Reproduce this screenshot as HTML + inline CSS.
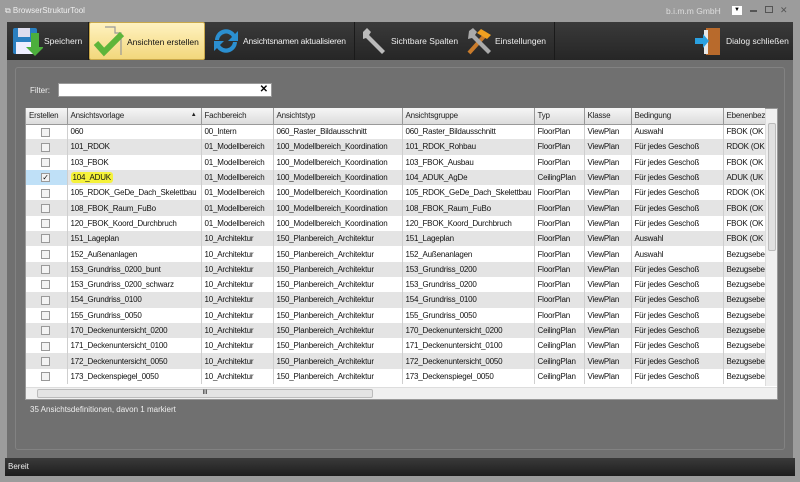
<!DOCTYPE html><html><head><meta charset="utf-8"><style>
*{margin:0;padding:0;box-sizing:border-box}
body{width:800px;height:482px;background:#9c9c9c;font-family:"Liberation Sans",sans-serif;font-size:8px;position:relative;overflow:hidden}
.a{position:absolute}
.tb{left:7px;top:22px;width:786px;height:38px;background:linear-gradient(#3a3a3a,#262626)}
.btn{position:absolute;top:0;height:38px;color:#eee;font-size:8.5px;line-height:38px;white-space:nowrap}
.main{left:7px;top:60px;width:786px;height:398px;background:#707070}
.panel{left:15px;top:67px;width:770px;height:383px;border:1px solid #828282;border-radius:3px}
table{border-collapse:collapse;table-layout:fixed;position:absolute;left:26px;top:108px;width:739px}
td,th{height:15.3px;padding:0 3px;white-space:nowrap;overflow:hidden;font-weight:normal;text-align:left;color:#111;border-right:1px solid #cfcfcf;letter-spacing:-0.2px}
th{background:linear-gradient(#f6f6f6,#dcdcdc);border-right:1px solid #999;border-bottom:1px solid #999;color:#222;height:16px;position:relative}
tr:nth-child(odd) td{background:#e4e4e4}
tr:nth-child(even) td{background:#fff}
.cb{display:inline-block;width:9px;height:9px;border:1px solid #999;background:#f3f3f3;margin-left:12px;vertical-align:middle}
</style></head><body>
<div class="a" style="left:5px;top:6px;color:#eee;font-size:8px">⧉ BrowserStrukturTool</div>
<div class="a" style="left:666px;top:6px;color:#ddd;font-size:8.5px">b.i.m.m GmbH</div>
<div class="a" style="left:732px;top:6px;width:10px;height:9px;background:#fff;font-size:6px;text-align:center;line-height:9px">▼</div>
<div class="a" style="left:750px;top:10px;width:7px;height:2px;background:#555"></div>
<div class="a" style="left:765px;top:6px;width:8px;height:7px;border:1.5px solid #555"></div>
<div class="a" style="left:780px;top:5px;color:#555;font-size:9px">✕</div>
<div class="a tb">
 <div class="btn" style="left:0;width:82px;border-right:1px solid #1a1a1a">
  <svg class="a" style="left:4px;top:3px" width="32" height="32"><rect x="2" y="3" width="24" height="26" rx="2" fill="#2a7fc0"/><rect x="7" y="3" width="12" height="9" fill="#dde"/><rect x="5" y="17" width="18" height="12" fill="#eef"/><path d="M20 8v14h-5l9 9 9-9h-5V8z" fill="#4caf3c"/></svg>
  <span style="position:absolute;left:37px">Speichern</span></div>
 <div class="btn" style="left:82px;width:116px;background:linear-gradient(#fff2c0,#f2d77c);border:1px solid #c9a84a;border-radius:2px;color:#111">
  <svg class="a" style="left:3px;top:2px" width="34" height="34"><path d="M12 2h10v6h6v22" fill="none" stroke="#999" stroke-width="1.2"/><path d="M3 18l8 9 18-18" fill="none" stroke="#5db53a" stroke-width="6"/></svg>
  <span style="position:absolute;left:37px">Ansichten erstellen</span></div>
 <div class="btn" style="left:198px;width:150px;border-right:1px solid #1a1a1a">
  <svg class="a" style="left:6px;top:4px" width="30" height="30"><path d="M4 14A11 11 0 0 1 24 8l3-3v10H17l4-4A7 7 0 0 0 8 14z" fill="#2b8fd0"/><path d="M26 16A11 11 0 0 1 6 22l-3 3V15h10l-4 4a7 7 0 0 0 13-3z" fill="#2b8fd0"/></svg>
  <span style="position:absolute;left:38px;letter-spacing:-0.2px">Ansichtsnamen aktualisieren</span></div>
 <div class="btn" style="left:348px;width:106px">
  <svg class="a" style="left:4px;top:4px" width="30" height="30"><path d="M4 6l4-4 4 4-2 3 16 16-3 3L7 12 4 13z" fill="#bbb"/></svg>
  <span style="position:absolute;left:36px">Sichtbare Spalten</span></div>
 <div class="btn" style="left:452px;width:96px;border-right:1px solid #1a1a1a">
  <svg class="a" style="left:4px;top:3px" width="32" height="32"><path d="M6 28L24 8" stroke="#c97b2b" stroke-width="4"/><path d="M18 4l10 6-4 4-10-6z" fill="#f0a020"/><path d="M6 6l4-3 4 4-2 3 16 16-3 3L9 13 5 14z" fill="#aaa"/></svg>
  <span style="position:absolute;left:36px">Einstellungen</span></div>
 <div class="btn" style="left:686px;width:100px">
  <svg class="a" style="left:0;top:3px" width="30" height="32"><rect x="13" y="3" width="14" height="27" fill="#b86a2c"/><rect x="11" y="5" width="4" height="24" fill="#e8e8e8"/><path d="M2 13h8v-4l6 7-6 7v-4H2z" fill="#2aa0e0"/></svg>
  <span style="position:absolute;left:33px">Dialog schließen</span></div>
</div>
<div class="a main"></div>
<div class="a panel"></div>
<div class="a" style="left:30px;top:86px;color:#eee;font-size:8px">Filter:</div>
<div class="a" style="left:58px;top:83px;width:214px;height:14px;background:#fff;border:1px solid #999"><span style="position:absolute;right:3px;top:0;font-size:10px;font-weight:bold">✕</span></div>
<div class="a" style="left:25px;top:108px;width:753px;height:292px;background:#fff;border:1px solid #999"></div>
<table>
<colgroup><col style="width:41px"><col style="width:134px"><col style="width:72px"><col style="width:129px"><col style="width:132px"><col style="width:50px"><col style="width:47px"><col style="width:92px"><col style="width:42px"></colgroup>
<tr><th>Erstellen</th><th>Ansichtsvorlage<span style="position:absolute;right:4px;top:4px;font-size:6px">▲</span></th><th>Fachbereich</th><th>Ansichtstyp</th><th>Ansichtsgruppe</th><th>Typ</th><th>Klasse</th><th>Bedingung</th><th>Ebenenbez</th></tr>
<tr><td><span class="cb"></span></td><td>060</td><td>00_Intern</td><td>060_Raster_Bildausschnitt</td><td>060_Raster_Bildausschnitt</td><td>FloorPlan</td><td>ViewPlan</td><td>Auswahl</td><td>FBOK (OK</td></tr>
<tr><td><span class="cb"></span></td><td>101_RDOK</td><td>01_Modellbereich</td><td>100_Modellbereich_Koordination</td><td>101_RDOK_Rohbau</td><td>FloorPlan</td><td>ViewPlan</td><td>Für jedes Geschoß</td><td>RDOK (OK</td></tr>
<tr><td><span class="cb"></span></td><td>103_FBOK</td><td>01_Modellbereich</td><td>100_Modellbereich_Koordination</td><td>103_FBOK_Ausbau</td><td>FloorPlan</td><td>ViewPlan</td><td>Für jedes Geschoß</td><td>FBOK (OK</td></tr>
<tr><td style="background:#bfe0f7"><span class="cb" style="font-size:8px;line-height:7px;text-align:center">✓</span></td><td><span style="background:#f5f23a;padding:1px 2px;border-radius:3px">104_ADUK</span></td><td>01_Modellbereich</td><td>100_Modellbereich_Koordination</td><td>104_ADUK_AgDe</td><td>CeilingPlan</td><td>ViewPlan</td><td>Für jedes Geschoß</td><td>ADUK (UK</td></tr>
<tr><td><span class="cb"></span></td><td>105_RDOK_GeDe_Dach_Skelettbau</td><td>01_Modellbereich</td><td>100_Modellbereich_Koordination</td><td>105_RDOK_GeDe_Dach_Skelettbau</td><td>FloorPlan</td><td>ViewPlan</td><td>Für jedes Geschoß</td><td>RDOK (OK</td></tr>
<tr><td><span class="cb"></span></td><td>108_FBOK_Raum_FuBo</td><td>01_Modellbereich</td><td>100_Modellbereich_Koordination</td><td>108_FBOK_Raum_FuBo</td><td>FloorPlan</td><td>ViewPlan</td><td>Für jedes Geschoß</td><td>FBOK (OK</td></tr>
<tr><td><span class="cb"></span></td><td>120_FBOK_Koord_Durchbruch</td><td>01_Modellbereich</td><td>100_Modellbereich_Koordination</td><td>120_FBOK_Koord_Durchbruch</td><td>FloorPlan</td><td>ViewPlan</td><td>Für jedes Geschoß</td><td>FBOK (OK</td></tr>
<tr><td><span class="cb"></span></td><td>151_Lageplan</td><td>10_Architektur</td><td>150_Planbereich_Architektur</td><td>151_Lageplan</td><td>FloorPlan</td><td>ViewPlan</td><td>Auswahl</td><td>FBOK (OK</td></tr>
<tr><td><span class="cb"></span></td><td>152_Außenanlagen</td><td>10_Architektur</td><td>150_Planbereich_Architektur</td><td>152_Außenanlagen</td><td>FloorPlan</td><td>ViewPlan</td><td>Auswahl</td><td>Bezugsebe</td></tr>
<tr><td><span class="cb"></span></td><td>153_Grundriss_0200_bunt</td><td>10_Architektur</td><td>150_Planbereich_Architektur</td><td>153_Grundriss_0200</td><td>FloorPlan</td><td>ViewPlan</td><td>Für jedes Geschoß</td><td>Bezugsebe</td></tr>
<tr><td><span class="cb"></span></td><td>153_Grundriss_0200_schwarz</td><td>10_Architektur</td><td>150_Planbereich_Architektur</td><td>153_Grundriss_0200</td><td>FloorPlan</td><td>ViewPlan</td><td>Für jedes Geschoß</td><td>Bezugsebe</td></tr>
<tr><td><span class="cb"></span></td><td>154_Grundriss_0100</td><td>10_Architektur</td><td>150_Planbereich_Architektur</td><td>154_Grundriss_0100</td><td>FloorPlan</td><td>ViewPlan</td><td>Für jedes Geschoß</td><td>Bezugsebe</td></tr>
<tr><td><span class="cb"></span></td><td>155_Grundriss_0050</td><td>10_Architektur</td><td>150_Planbereich_Architektur</td><td>155_Grundriss_0050</td><td>FloorPlan</td><td>ViewPlan</td><td>Für jedes Geschoß</td><td>Bezugsebe</td></tr>
<tr><td><span class="cb"></span></td><td>170_Deckenuntersicht_0200</td><td>10_Architektur</td><td>150_Planbereich_Architektur</td><td>170_Deckenuntersicht_0200</td><td>CeilingPlan</td><td>ViewPlan</td><td>Für jedes Geschoß</td><td>Bezugsebe</td></tr>
<tr><td><span class="cb"></span></td><td>171_Deckenuntersicht_0100</td><td>10_Architektur</td><td>150_Planbereich_Architektur</td><td>171_Deckenuntersicht_0100</td><td>CeilingPlan</td><td>ViewPlan</td><td>Für jedes Geschoß</td><td>Bezugsebe</td></tr>
<tr><td><span class="cb"></span></td><td>172_Deckenuntersicht_0050</td><td>10_Architektur</td><td>150_Planbereich_Architektur</td><td>172_Deckenuntersicht_0050</td><td>CeilingPlan</td><td>ViewPlan</td><td>Für jedes Geschoß</td><td>Bezugsebe</td></tr>
<tr><td><span class="cb"></span></td><td>173_Deckenspiegel_0050</td><td>10_Architektur</td><td>150_Planbereich_Architektur</td><td>173_Deckenspiegel_0050</td><td>CeilingPlan</td><td>ViewPlan</td><td>Für jedes Geschoß</td><td>Bezugsebe</td></tr>
</table>
<div class="a" style="left:26px;top:384px;width:739px;height:3px;background:#fff"></div>
<div class="a" style="left:765px;top:109px;width:12px;height:277px;background:#f0f0f0;border-left:1px solid #ddd"><div class="a" style="left:2px;top:14px;width:8px;height:128px;background:#e0e0e0;border:1px solid #bbb;border-radius:2px"></div></div>
<div class="a" style="left:26px;top:387px;width:751px;height:12px;background:#f0f0f0;border-top:1px solid #ddd"><div class="a" style="left:11px;top:1px;width:336px;height:9px;background:#e4e4e4;border:1px solid #bbb;border-radius:2px;font-size:6px;text-align:center;line-height:7px">III</div></div>
<div class="a" style="left:30px;top:405px;color:#eee;font-size:8px">35 Ansichtsdefinitionen, davon 1 markiert</div>
<div class="a" style="left:5px;top:458px;width:790px;height:18px;background:linear-gradient(#3a3a3a,#1e1e1e);color:#eee;font-size:8px;line-height:18px;padding-left:3px">Bereit</div>
</body></html>
